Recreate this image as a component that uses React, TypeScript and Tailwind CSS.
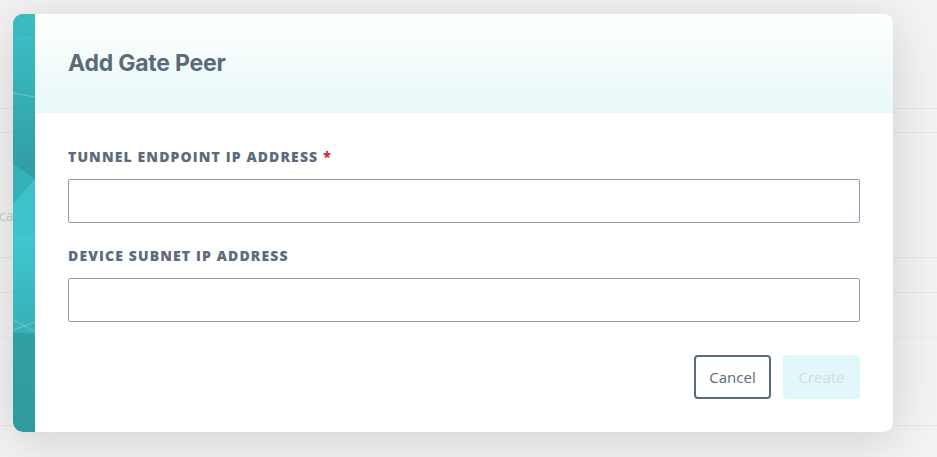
import React from 'react';

const SideStrip: React.FC = () => (
  <svg className="block w-[22px] h-full" viewBox="0 0 22 418" preserveAspectRatio="none">
    <defs>
      <linearGradient id="stripTop" x1="0" y1="0" x2="0" y2="1">
        <stop offset="0" stopColor="#3bbdc3" />
        <stop offset="1" stopColor="#2f9ca2" />
      </linearGradient>
      <linearGradient id="stripMid" x1="0" y1="0" x2="0" y2="1">
        <stop offset="0" stopColor="#3fc8ce" />
        <stop offset="1" stopColor="#35b0b6" />
      </linearGradient>
      <linearGradient id="stripBot" x1="0" y1="0" x2="0" y2="1">
        <stop offset="0" stopColor="#36b2b8" />
        <stop offset="1" stopColor="#2f9a9f" />
      </linearGradient>
    </defs>
    <rect x="0" y="0" width="22" height="418" fill="url(#stripBot)" />
    <rect x="0" y="0" width="22" height="20" fill="#3abbc1" />
    <polygon points="0,20 22,22 22,165 0,150" fill="url(#stripTop)" />
    <polygon points="0,150 22,165 0,190" fill="#36b1b7" />
    <polygon points="22,165 22,222 0,220 0,190" fill="#3dc4ca" />
    <polygon points="0,220 22,222 22,320 0,318" fill="url(#stripMid)" />
    <line x1="0" y1="79" x2="22" y2="83" stroke="#ffffff" strokeOpacity="0.35" strokeWidth="0.8" />
    <line x1="0" y1="305" x2="22" y2="318" stroke="#ffffff" strokeOpacity="0.35" strokeWidth="0.8" />
    <line x1="0" y1="316" x2="22" y2="308" stroke="#ffffff" strokeOpacity="0.35" strokeWidth="0.8" />
  </svg>
);

const Field: React.FC<{ label: string; required?: boolean }> = ({ label, required }) => (
  <div className="flex flex-col">
    <label className="text-[14px] leading-[20px] font-extrabold tracking-[0.08em] text-[#5b6b7c] font-['Open_Sans',sans-serif] mb-[12px]">
      {label}
      {required && <span className="text-[#c9302c] ml-[5px]">*</span>}
    </label>
    <input className="h-[44px] w-full rounded-[2px] border border-[#8d9cad] bg-white outline-none" />
  </div>
);

export default function App() {
  return (
    <div className="relative w-[937px] h-[457px] overflow-hidden bg-[#f3f3f3] font-['Open_Sans',sans-serif]">
      {/* faint page behind the modal */}
      <div className="absolute inset-0 flex flex-col pt-[108px]">
        <div className="h-px bg-[#e6e6e6]" />
        <div className="h-[23px]" />
        <div className="h-px bg-[#e6e6e6]" />
        <div className="h-[124px] flex items-center">
          <span className="text-[14px] text-[#cccccc] -ml-[1px] mt-[40px]">ca</span>
        </div>
        <div className="h-px bg-[#e6e6e6]" />
        <div className="h-[34px]" />
        <div className="h-px bg-[#e6e6e6]" />
        <div className="h-[44px]" />
        <div className="h-px bg-[#ececec]" />
        <div className="h-[87px]" />
        <div className="h-px bg-[#e6e6e6]" />
      </div>

      <div className="absolute inset-0 p-[14px_44px_25px_13px]">
        <div className="flex h-full rounded-[10px] overflow-hidden bg-white shadow-[0_8px_50px_rgba(0,0,0,0.15)]">
          <SideStrip />
          <div className="flex-1 flex flex-col">
            <div className="h-[99px] flex items-center pl-[33px] bg-gradient-to-b from-[#fdffff] to-[#e9f8f8]">
              <h2 className="text-[23px] font-bold text-[#5a6a7b] font-['Inter',sans-serif] tracking-[-0.01em] mt-[-1px]">
                Add Gate Peer
              </h2>
            </div>
            <div className="flex flex-col px-[33px] pt-[34px] gap-[23px]">
              <Field label="TUNNEL ENDPOINT IP ADDRESS" required />
              <Field label="DEVICE SUBNET IP ADDRESS" />
              <div className="flex justify-end gap-[12px] mt-[10px]">
                <button className="w-[77px] h-[44px] rounded-[4px] border-2 border-[#5b6b7c] text-[15px] text-[#5b6b7c] bg-white">
                  Cancel
                </button>
                <button className="w-[77px] h-[44px] rounded-[4px] bg-[#e2f7f9] text-[15px] text-[#d3dcdf]">
                  Create
                </button>
              </div>
            </div>
          </div>
        </div>
      </div>
    </div>
  );
}
